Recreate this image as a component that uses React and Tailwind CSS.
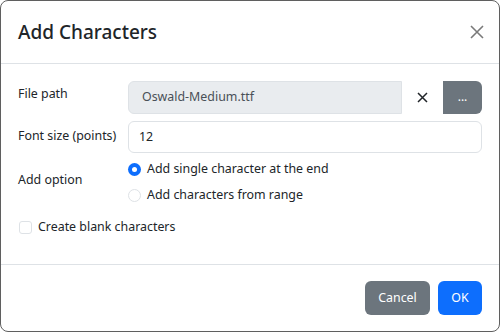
export default function App() {
  return (
    <div
      className="w-[500px] h-[332px] bg-white border border-[#5f5f5f] rounded-[8px] flex flex-col text-[#212529] overflow-hidden"
      style={{ fontFamily: '"Noto Sans", "Open Sans", sans-serif' }}
    >
      <div className="h-[63px] flex-shrink-0 flex items-center justify-between pl-[17px] pr-[14px] border-b border-[#dee2e6]">
        <h1 className="text-[19px] font-medium leading-none">Add Characters</h1>
        <button aria-label="Close" className="w-[16px] h-[16px] flex items-center justify-center">
          <svg width="14" height="14" viewBox="0 0 14 14" stroke="#7a7a7a" strokeWidth="1.6">
            <path d="M1 1 13 13M13 1 1 13" />
          </svg>
        </button>
      </div>

      <div className="flex-1 px-[17px] pt-[17px] text-[12.4px]">
        <div className="flex items-center h-[33px]">
          <span className="w-[110px] flex-shrink-0 pb-[6px]">File path</span>
          <div className="flex-1 h-full flex items-center bg-[#e9ecef] border border-[#dee2e6] rounded-l-[6px] px-[13px] text-[#495057]">
            Oswald-Medium.ttf
          </div>
          <button className="w-[41px] h-full flex items-center justify-center">
            <svg width="11" height="11" viewBox="0 0 11 11" stroke="#212529" strokeWidth="1.5">
              <path d="M1 1 10 10M10 1 1 10" />
            </svg>
          </button>
          <button className="w-[39px] h-full bg-[#6c757d] rounded-r-[6px] text-white text-[12px] leading-none pb-[2px]">
            ...
          </button>
        </div>

        <div className="flex items-center h-[32px] mt-[7px]">
          <span className="w-[110px] flex-shrink-0 pb-[2px]">Font size (points)</span>
          <div className="flex-1 h-full flex items-center border border-[#dee2e6] rounded-[6px] px-[10px]">
            12
          </div>
        </div>

        <div className="flex items-center mt-[3px]">
          <span className="w-[110px] flex-shrink-0 pb-[3px]">Add option</span>
          <div className="flex flex-col">
            <label className="flex items-center h-[26px] gap-[6px]">
              <span className="w-[13px] h-[13px] rounded-full bg-[#0d6efd] flex items-center justify-center">
                <span className="w-[5px] h-[5px] rounded-full bg-white" />
              </span>
              Add single character at the end
            </label>
            <label className="flex items-center h-[26px] gap-[6px]">
              <span className="w-[13px] h-[13px] rounded-full border border-[#dee2e6]" />
              Add characters from range
            </label>
          </div>
        </div>

        <label className="flex items-center gap-[6px] mt-[6px] h-[26px] pl-[1px]">
          <span className="w-[13px] h-[13px] rounded-[3px] border border-[#dee2e6]" />
          Create blank characters
        </label>
      </div>

      <div className="h-[67px] flex-shrink-0 border-t border-[#dee2e6] flex items-center justify-end gap-[8px] pr-[17px] text-[12.4px]">
        <button className="w-[65px] h-[34px] rounded-[6px] bg-[#6c757d] text-white">Cancel</button>
        <button className="w-[44px] h-[34px] rounded-[6px] bg-[#0d6efd] text-white">OK</button>
      </div>
    </div>
  );
}
